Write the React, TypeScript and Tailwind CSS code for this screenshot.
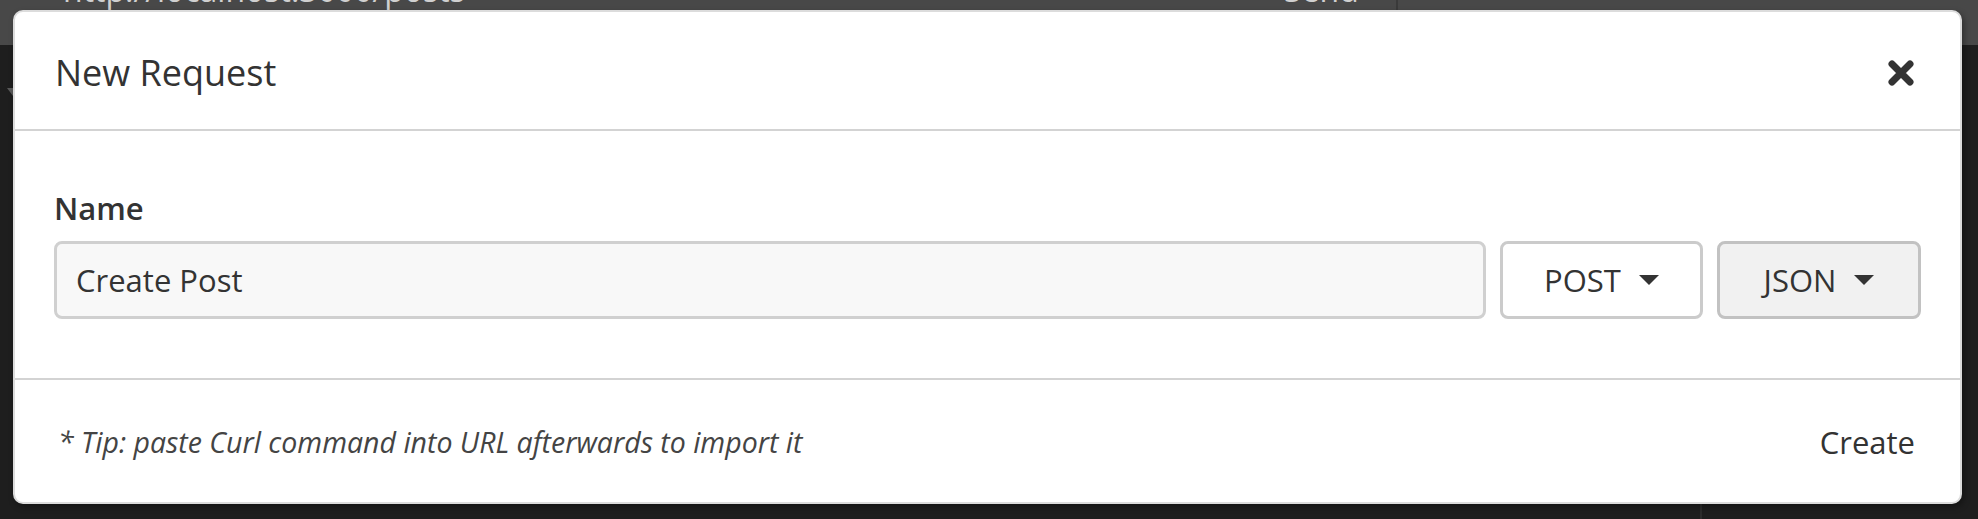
import React from 'react';

// Caret used by the method / body-type dropdowns
const Caret = () => (
  <svg width="20" height="10" viewBox="0 0 20 10" className="shrink-0">
    <path d="M0 0 L20 0 L10 10 Z" fill="#333333" />
  </svg>
);

const CloseIcon = () => (
  <svg width="28" height="28" viewBox="0 0 28 28">
    <path d="M5 5 L23 23 M23 5 L5 23" stroke="#333333" strokeWidth="7" strokeLinecap="round" />
  </svg>
);

const DropdownButton = ({ label, active }: { label: string; active?: boolean }) => (
  <button
    className={`flex h-[78px] items-center justify-center gap-[18px] rounded-[8px] border-[3px] px-[38px] text-[31px] text-[#333] ${
      active ? 'w-[204px] border-[#c2c2c2] bg-[#f1f1f1]' : 'w-[203px] border-[#cbcbcb] bg-white'
    }`}
  >
    <span>{label}</span>
    <Caret />
  </button>
);

export default function App() {
  return (
    <div
      className="relative h-[519px] w-[1978px] overflow-hidden bg-[#1e1e1e]"
      style={{ fontFamily: '"Open Sans", "Noto Sans", sans-serif' }}
    >
      {/* Dimmed app behind the modal */}
      <div className="flex h-[45px] bg-[#484848]">
        <div className="flex w-[1398px] border-r-2 border-[#3a3a3a] pl-[63px]">
          <span className="-mt-[34px] text-[32px] text-[#d0d0d0]">http://localhost:3000/posts</span>
        </div>
        <div className="flex flex-1" />
      </div>
      <div className="flex h-[474px]">
        <div className="w-[1702px] border-r-2 border-[#2c2c2c] pl-[7px] pt-[43px]">
          <div className="h-0 w-0 border-l-[6px] border-r-[6px] border-t-[8px] border-l-transparent border-r-transparent border-t-[#5a5a5a]" />
        </div>
      </div>
      <span className="absolute left-[1284px] -top-[34px] text-[32px] text-[#d0d0d0]">Send</span>

      {/* Modal */}
      <div className="absolute left-[13px] top-[10px] flex h-[494px] w-[1949px] flex-col overflow-hidden rounded-[10px] border-2 border-[#dcdcdc] bg-white text-[#333] shadow-[2px_3px_6px_rgba(0,0,0,0.35)]">
        <div className="flex h-[119px] shrink-0 items-center justify-between border-b-2 border-[#d3d3d3] pl-[40px] pr-[45px] pt-[4px]">
          <h1 className="text-[36px] font-normal leading-[48px] text-[#333]">New Request</h1>
          <CloseIcon />
        </div>

        <div className="flex shrink-0 flex-col border-b-2 border-[#d3d3d3] px-[39px] pb-[59px] pt-[57px]">
          <label className="text-[31px] font-semibold leading-[40px]">Name</label>
          <div className="mt-[13px] flex gap-[14px]">
            <div className="flex h-[78px] flex-1 items-center rounded-[8px] border-[3px] border-[#d0d0d0] bg-[#f8f8f8] px-[19px] text-[31px]">
              Create Post
            </div>
            <DropdownButton label="POST" />
            <DropdownButton label="JSON" active />
          </div>
        </div>

        <div className="flex flex-1 items-center justify-between pl-[43px] pr-[45px] pt-[2px]">
          <span className="text-[28.5px] italic text-[#444]">* Tip: paste Curl command into URL afterwards to import it</span>
          <button className="text-[31px] text-[#333]">Create</button>
        </div>
      </div>
    </div>
  );
}
